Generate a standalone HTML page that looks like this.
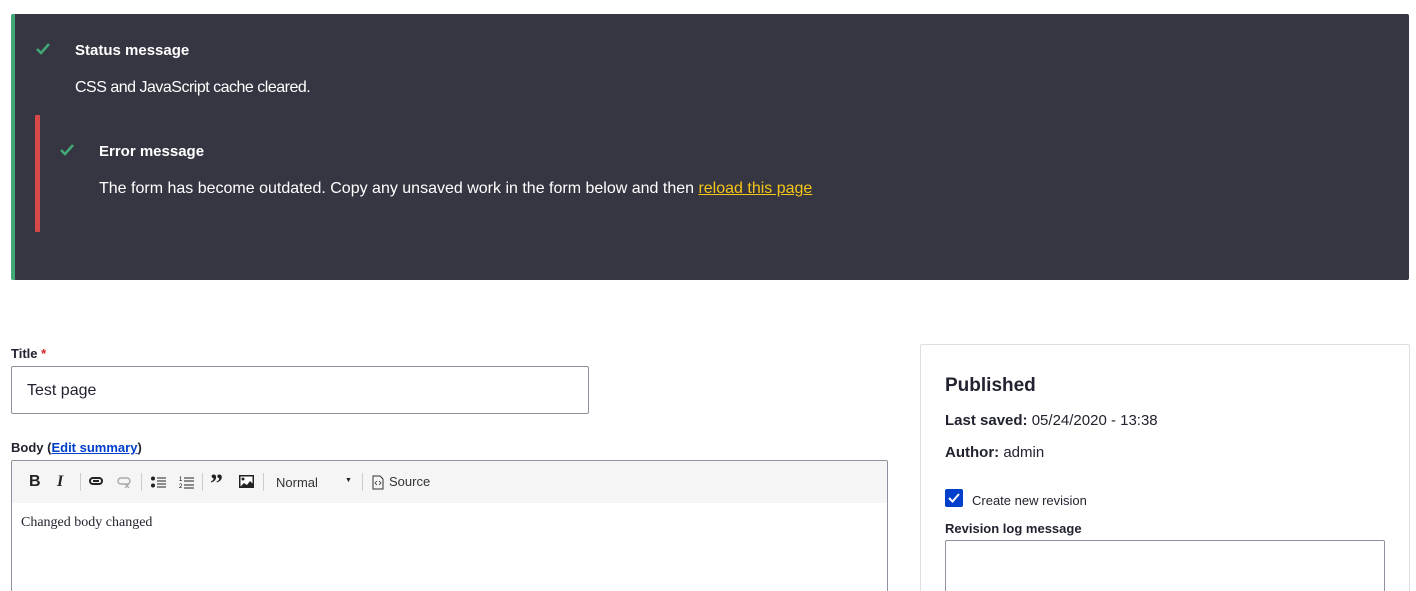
<!DOCTYPE html>
<html><head><style>
*{box-sizing:border-box;margin:0;padding:0}
html,body{width:1416px;height:591px;overflow:hidden}
body{background:#fff;font-family:"Liberation Sans",sans-serif;color:#222330;position:relative}
.a{position:absolute;white-space:nowrap}
.msg{left:11px;top:14px;width:1398px;height:266px;background:#353641;border-left:4px solid #42a877;border-radius:2px}
.w{color:#fff}
.tb span{position:absolute;font-size:14px;color:#222}
.sep{position:absolute;top:12px;width:1px;height:18px;background:#ccc}
</style></head><body>
<div class="a msg"></div>
<svg class="a" style="left:36px;top:43px" width="14" height="12" viewBox="0 0 14 12"><path d="M1 6l4 4 8-9" stroke="#42a877" stroke-width="2.5" fill="none"/></svg>
<div class="a w" style="left:75px;top:42px;font-size:15px;font-weight:bold">Status message</div>
<div class="a w" style="left:75px;top:79px;font-size:16px;letter-spacing:-0.5px">CSS and JavaScript cache cleared.</div>
<div class="a" style="left:35px;top:115px;width:5px;height:117px;background:#d94848;border-radius:1px"></div>
<svg class="a" style="left:60px;top:144px" width="14" height="12" viewBox="0 0 14 12"><path d="M1 6l4 4 8-9" stroke="#42a877" stroke-width="2.5" fill="none"/></svg>
<div class="a w" style="left:99px;top:143px;font-size:15px;font-weight:bold">Error message</div>
<div class="a w" style="left:99px;top:180px;font-size:16px">The form has become outdated. Copy any unsaved work in the form below and then <span style="color:#f5c518;text-decoration:underline">reload this page</span></div>

<div class="a" style="left:11px;top:346px;font-size:13px;font-weight:bold">Title <span style="color:#d72222">*</span></div>
<div class="a" style="left:11px;top:366px;width:578px;height:48px;border:1px solid #8e929c;border-radius:2px;font-size:16px;padding:15px 15px">Test page</div>
<div class="a" style="left:11px;top:440px;font-size:13px;font-weight:bold">Body (<span style="color:#003ecc;text-decoration:underline">Edit summary</span>)</div>
<div class="a" style="left:11px;top:460px;width:877px;height:140px;border:1px solid #8e929c;border-radius:2px;overflow:hidden">
 <div class="tb" style="position:relative;height:42px;background:#f5f5f5">
  <span style="left:17px;top:12px;font-weight:bold;font-size:16px">B</span>
  <span style="left:45px;top:12px;font-style:italic;font-weight:bold;font-size:16px;font-family:'Liberation Serif',serif">I</span>
  <div class="sep" style="left:68px"></div>
  <svg style="position:absolute;left:77px;top:16px" width="14" height="8" viewBox="0 0 14 8"><rect x="1" y="1" width="12" height="6" rx="3" stroke="#222" stroke-width="2" fill="none"/><path d="M4 4h6" stroke="#222" stroke-width="2"/></svg>
  <svg style="position:absolute;left:105px;top:16px" width="14" height="11" viewBox="0 0 14 11"><rect x="1" y="1" width="12" height="6" rx="3" stroke="#aaa" stroke-width="1.5" fill="none"/><path d="M8 7l4 4M12 7l-4 4" stroke="#aaa" stroke-width="1.2"/></svg>
  <div class="sep" style="left:129px"></div>
  <svg style="position:absolute;left:139px;top:15px" width="15" height="12" viewBox="0 0 15 12"><circle cx="2" cy="2.5" r="2" fill="#222"/><circle cx="2" cy="9.5" r="2" fill="#222"/><path d="M6 2h9M6 5h9M6 8h9M6 11h9" stroke="#222" stroke-width="1"/></svg>
  <svg style="position:absolute;left:167px;top:14px" width="15" height="14" viewBox="0 0 15 14"><text x="0" y="6" font-size="6" font-family="Liberation Sans">1</text><text x="0" y="13" font-size="6" font-family="Liberation Sans">2</text><path d="M5 3h10M5 6h10M5 10h10M5 13h10" stroke="#222" stroke-width="1"/></svg>
  <div class="sep" style="left:190px"></div>
  <span style="left:198px;top:8px;font-size:26px;font-weight:bold;font-family:'Liberation Serif',serif">”</span>
  <svg style="position:absolute;left:227px;top:14px" width="15" height="13" viewBox="0 0 15 13"><rect x="0.75" y="0.75" width="13.5" height="11.5" fill="#fff" stroke="#222" stroke-width="1.5"/><circle cx="4" cy="4" r="1.5" fill="#222"/><path d="M1 12l4-4 3 2 3-4 3 3v3z" fill="#222"/></svg>
  <div class="sep" style="left:251px"></div>
  <span style="left:264px;top:14px;font-size:13px;color:#333">Normal</span>
  <span style="left:333px;top:16px;font-size:7px">▼</span>
  <div class="sep" style="left:350px"></div>
  <svg style="position:absolute;left:360px;top:14px" width="12" height="15" viewBox="0 0 12 15"><path d="M1 1h7l3 3v10H1z" fill="none" stroke="#333"/><path d="M5 6l-2 2 2 2M7 6l2 2-2 2" stroke="#333" fill="none" stroke-width=".8"/></svg>
  <span style="left:377px;top:13px;font-size:13px;color:#333">Source</span>
 </div>
 <div style="padding:12px 9px;font-family:'Liberation Serif',serif;font-size:14px">Changed body changed</div>
</div>

<div class="a" style="left:920px;top:344px;width:490px;height:260px;border:1px solid #dedee4;border-radius:2px"></div>
<div class="a" style="left:945px;top:375px;font-size:19px;font-weight:bold">Published</div>
<div class="a" style="left:945px;top:412px;font-size:15px"><b>Last saved:</b> 05/24/2020 - 13:38</div>
<div class="a" style="left:945px;top:444px;font-size:15px"><b>Author:</b> admin</div>
<div class="a" style="left:945px;top:489px;width:18px;height:18px;background:#003ecc;border-radius:2px"></div>
<svg class="a" style="left:948px;top:493px" width="12" height="10" viewBox="0 0 12 10"><path d="M1 5l3.5 3.5L11 1" stroke="#fff" stroke-width="2" fill="none"/></svg>
<div class="a" style="left:972px;top:493px;font-size:13px">Create new revision</div>
<div class="a" style="left:945px;top:521px;font-size:13px;font-weight:bold">Revision log message</div>
<div class="a" style="left:945px;top:540px;width:440px;height:70px;border:1px solid #8e929c;border-radius:2px"></div>
</body></html>
